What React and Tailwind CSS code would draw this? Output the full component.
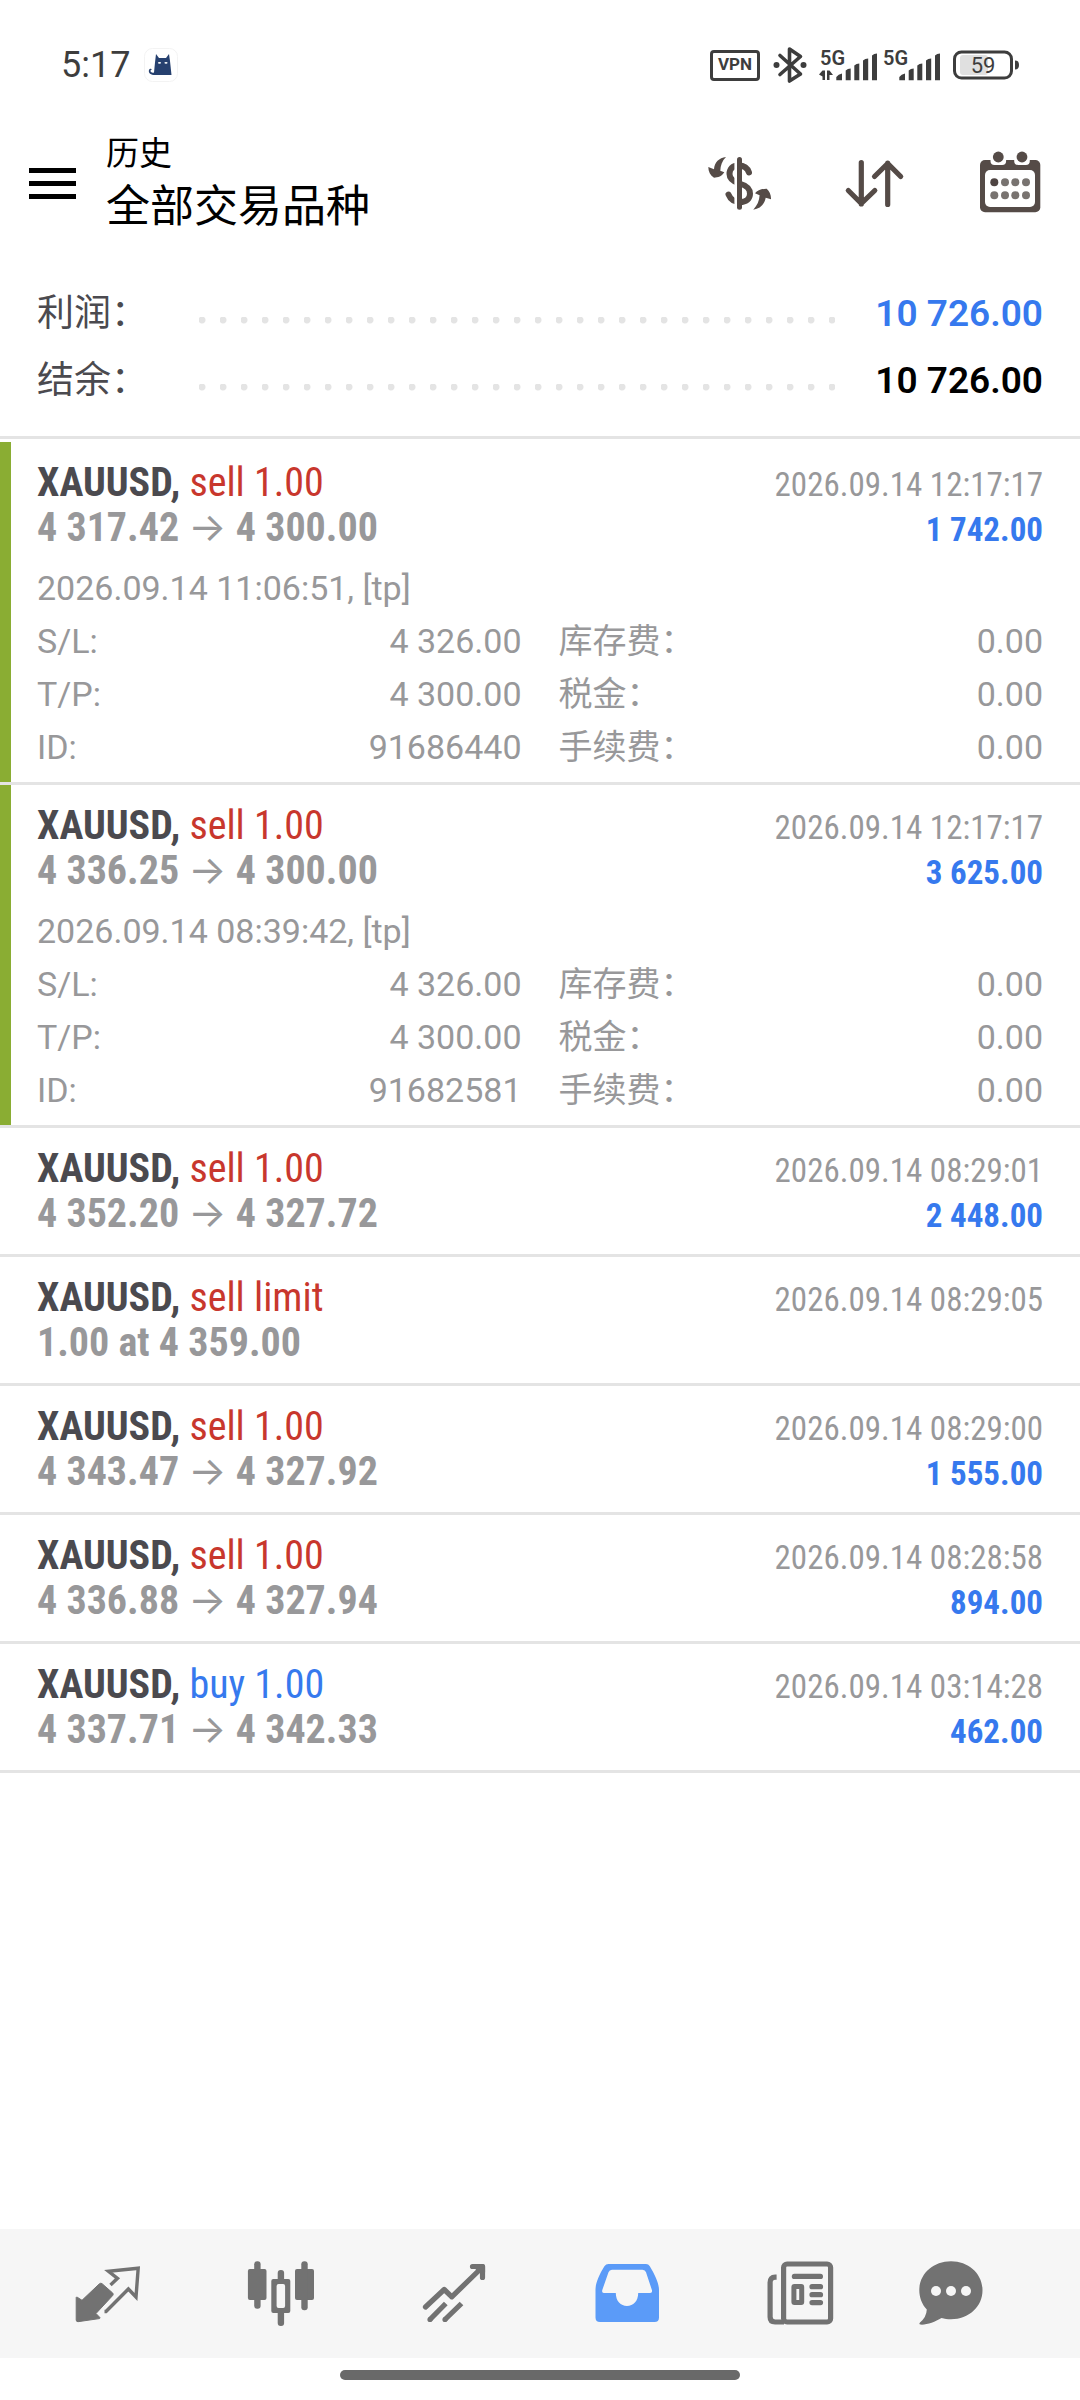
import React from 'react';

const TOTALS = [
  { label: '利润：', value: '10 726.00', color: 'text-[#3679ee]' },
  { label: '结余：', value: '10 726.00', color: 'text-black' },
];

const DEALS = [
  {
    id: '91686440',
    symbol: 'XAUUSD',
    side: 'sell',
    action: 'sell 1.00',
    from: '4 317.42',
    to: '4 300.00',
    closed: '2026.09.14 12:17:17',
    profit: '1 742.00',
    details: { opened: '2026.09.14 11:06:51, [tp]', sl: '4 326.00', tp: '4 300.00' },
  },
  {
    id: '91682581',
    symbol: 'XAUUSD',
    side: 'sell',
    action: 'sell 1.00',
    from: '4 336.25',
    to: '4 300.00',
    closed: '2026.09.14 12:17:17',
    profit: '3 625.00',
    details: { opened: '2026.09.14 08:39:42, [tp]', sl: '4 326.00', tp: '4 300.00' },
  },
  {
    id: '3',
    symbol: 'XAUUSD',
    side: 'sell',
    action: 'sell 1.00',
    from: '4 352.20',
    to: '4 327.72',
    closed: '2026.09.14 08:29:01',
    profit: '2 448.00',
  },
  {
    id: '4',
    symbol: 'XAUUSD',
    side: 'sell',
    action: 'sell limit',
    note: '1.00 at 4 359.00',
    closed: '2026.09.14 08:29:05',
  },
  {
    id: '5',
    symbol: 'XAUUSD',
    side: 'sell',
    action: 'sell 1.00',
    from: '4 343.47',
    to: '4 327.92',
    closed: '2026.09.14 08:29:00',
    profit: '1 555.00',
  },
  {
    id: '6',
    symbol: 'XAUUSD',
    side: 'sell',
    action: 'sell 1.00',
    from: '4 336.88',
    to: '4 327.94',
    closed: '2026.09.14 08:28:58',
    profit: '894.00',
  },
  {
    id: '7',
    symbol: 'XAUUSD',
    side: 'buy',
    action: 'buy 1.00',
    from: '4 337.71',
    to: '4 342.33',
    closed: '2026.09.14 03:14:28',
    profit: '462.00',
  },
];

/* ---------- status bar ---------- */

const CatIcon = () => (
  <svg width="34" height="34" viewBox="0 0 34 34" aria-hidden="true">
    <rect x="0.5" y="0.5" width="33" height="33" rx="8" fill="#fff" stroke="#f3f3f3" />
    <path
      d="M12 6l3 4h7l3-4 1 7 1.5 14H11c-4 0-7-2-6-5 .5-1.500 2.500-1.500 3-.5-1.500 0-2 1.500-1 2.500.8.8 2 .8 3 .5l1-10z"
      fill="#26406f"
    />
    <ellipse cx="15.500" cy="14.800" rx="1.600" ry="0.900" fill="#fff" />
    <ellipse cx="22" cy="14.800" rx="1.600" ry="0.900" fill="#fff" />
  </svg>
);

const BluetoothIcon = () => (
  <svg width="34" height="38" viewBox="0 0 34 38" fill="none" stroke="#3d3d3d" strokeWidth="3.600" aria-hidden="true">
    <path d="M7 9.500L27.500 28 16.500 35V3l11 7.500L7 28.500" strokeLinejoin="round" strokeLinecap="round" />
    <circle cx="3.500" cy="19" r="3" fill="#3d3d3d" stroke="none" />
    <circle cx="30.500" cy="19" r="3" fill="#3d3d3d" stroke="none" />
  </svg>
);

const SignalIcon = ({ data }) => (
  <svg width="60" height="44" viewBox="0 -6 60 44" fill="#3d3d3d" aria-hidden="true">
    <text x="1" y="16" fontSize="20" fontWeight="600" fontFamily="Roboto, sans-serif">5G</text>
    {data && (
      <path d="M3.500 21.500h2.500V31H3.500v-3.500L0 25.500zM8 21.500h2.500l3.500 4.500h-3.500v5H8z" />
    )}
    <path d="M17.300 31.300V28q2-3 5.700-3.500v6.800z" />
    <path d="M26.700 31.300V21.500q2-1.800 5-2v11.800z" />
    <path d="M35.300 31.300V16.500q2-1.800 5-2v16.800z" />
    <path d="M44 31.300V11.500q2-1.800 5.200-2v21.800z" />
    <path d="M53 31.300V6.500q2-1.800 5-2v26.800z" />
  </svg>
);

const BatteryIcon = () => (
  <svg width="66" height="30" viewBox="0 0 66 30" aria-hidden="true">
    <rect x="7" y="5" width="28" height="20" rx="3" fill="#e0e0e0" />
    <rect x="1.500" y="2" width="57" height="26" rx="7" fill="none" stroke="#3d3d3d" strokeWidth="3" />
    <path d="M62 10.500q4 0 4 4.500t-4 4.500z" fill="#3d3d3d" />
    <text x="30" y="23" fontSize="22" fill="#3d3d3d" textAnchor="middle" fontFamily="Roboto, sans-serif">59</text>
  </svg>
);

const StatusBar = () => (
  <div className="flex h-[130px] items-center pl-[61px] pr-[61px] text-[#3d3d3d]">
    <span className="text-[36px]">5:17</span>
    <span className="ml-[14px]">
      <CatIcon />
    </span>
    <div className="ml-auto flex items-center">
      <span className="flex h-[31px] w-[50px] items-center justify-center rounded-[4px] border-[3px] border-[#3d3d3d] text-[17px] font-bold">
        VPN
      </span>
      <span className="ml-[13px]">
        <BluetoothIcon />
      </span>
      <span className="ml-3 flex gap-[3px]">
        <SignalIcon data />
        <SignalIcon />
      </span>
      <span className="ml-[11px]">
        <BatteryIcon />
      </span>
    </div>
  </div>
);

/* ---------- header ---------- */

const CurrencyIcon = () => (
  <svg width="72" height="72" viewBox="0 0 72 72" fill="#554b47" aria-hidden="true">
    <path
      d="M45 25.500C43.500 21 40 18.500 34.500 18.500 28.500 18.500 25.500 22 25.500 27c0 6 5 8 10 9.500 7 2 10.500 4.500 10.500 10.300C46 52 42 55 36 55c-5.500 0-9.500-2.500-11.500-7.500"
      fill="none"
      stroke="#554b47"
      strokeWidth="6"
      strokeLinecap="round"
    />
    <path d="M31.700 12v50" stroke="#fff" strokeWidth="2.600" />
    <rect x="33" y="10" width="5" height="52.700" rx="2.500" />
    <path d="M22 10C15 11 10.500 15 10 22.300L4.300 20c0 4.500 2 8.500 5.700 10.700 4 0 8-1.500 10.300-5.400l-4-1.600C16.500 18.500 18 14 22 10z" />
    <path d="M49.300 62.700c4-4.500 6-9 6.300-14.500L51 46.300c2.500-3 7-4.700 11.700-4.600 2.800 2.300 4.500 6.300 4.300 10.600l-5.300-1.600C60.500 57.500 56 61.500 49.300 62.700z" />
  </svg>
);

const SortIcon = () => (
  <svg
    width="72"
    height="72"
    viewBox="0 0 72 72"
    fill="none"
    stroke="#554b47"
    strokeWidth="5.200"
    strokeLinecap="round"
    strokeLinejoin="round"
    aria-hidden="true"
  >
    <path d="M22.300 15.500V57M9.300 43.500l13 13 13.500-13" />
    <path d="M48.700 57.500V16M35.500 29.500l13.200-13 13 13" />
  </svg>
);

const CalendarIcon = () => (
  <svg width="72" height="72" viewBox="0 0 72 72" aria-hidden="true">
    <rect x="6" y="13" width="60.300" height="52.300" rx="5" fill="#554b47" />
    <rect x="16.500" y="2" width="15.600" height="16" rx="4" fill="#fff" />
    <rect x="40.200" y="2" width="15.600" height="16" rx="4" fill="#fff" />
    <circle cx="24.300" cy="10" r="5.400" fill="#554b47" />
    <circle cx="48" cy="10" r="5.400" fill="#554b47" />
    <rect x="11" y="23" width="50" height="37" rx="5" fill="#fff" />
    {[35.3, 48.3].map((cy) =>
      [20.3, 31, 41.3, 52].map((cx) => (
        <circle key={`${cx}-${cy}`} cx={cx} cy={cy} r="4" fill={cx < 21 && cy < 36 ? '#4e4442' : '#787370'} />
      ))
    )}
  </svg>
);

const Header = () => (
  <header className="flex h-[106px] items-center pl-[29px] pr-[34px]">
    <button type="button" aria-label="菜单" className="flex w-[47px] flex-col gap-2">
      <span className="h-[5px] w-full bg-black"></span>
      <span className="h-[5px] w-full bg-black"></span>
      <span className="h-[5px] w-full bg-black"></span>
    </button>
    <div className="ml-[30px] text-black">
      <p className="text-[33px] leading-[48px]">历史</p>
      <h1 className="text-[44px] leading-[58px]">全部交易品种</h1>
    </div>
    <div className="ml-auto flex gap-[63px]">
      <button type="button" aria-label="货币"><CurrencyIcon /></button>
      <button type="button" aria-label="排序"><SortIcon /></button>
      <button type="button" aria-label="日历"><CalendarIcon /></button>
    </div>
  </header>
);

const Totals = () => (
  <dl className="border-b-[3px] border-[#e4e4e4] px-[37px] pt-[44px] pb-[22px]">
    {TOTALS.map((row) => (
      <div key={row.label} className="flex h-[67px] items-center text-[37px]">
        <dt className="w-[162px] text-[#4b4a4f]">{row.label}</dt>
        <dd className="flex flex-1 items-center">
          <span className="mt-[14px] h-[7px] flex-1 bg-[radial-gradient(circle_at_3px_3px,#e4e4e4_3px,transparent_4px)] bg-[size:21px_7px]"></span>
          <span className={`ml-10 font-semibold ${row.color}`}>{row.value}</span>
        </dd>
      </div>
    ))}
  </dl>
);

/* ---------- deals ---------- */

const DetailRow = ({ label, value }) => (
  <div className="flex h-[53px] justify-between">
    <dt>{label}</dt>
    <dd>{value}</dd>
  </div>
);

const Deal = ({ deal }) => {
  const { details } = deal;

  return (
    <li className="border-b-[3px] border-[#e4e4e4]">
      <div
        className={
          details
            ? 'border-l-[11px] border-[#8aad33] pt-[18px] pr-[37px] pb-2 pl-[26px]'
            : 'px-[37px] py-[18px]'
        }
      >
        <div className="font-['Roboto_Condensed',Roboto,'Noto_Sans_CJK_SC',sans-serif] leading-[45px]">
          <div className="flex h-[45px] items-baseline justify-between">
            <h2 className="text-[40px] font-bold text-[#4b4a4f]">
              {deal.symbol},{' '}
              <span className={deal.side === 'buy' ? 'font-normal text-[#3679ee]' : 'font-normal text-[#c8372d]'}>
                {deal.action}
              </span>
            </h2>
            <time className="text-[33px] text-[#98989a]">{deal.closed}</time>
          </div>
          <div className="flex h-[45px] items-baseline justify-between">
            <p className="text-[40px] font-bold text-[#98989a]">
              {deal.note || (
                <>
                  {deal.from}{' '}
                  <span className="font-[Inter,sans-serif] leading-none font-normal">→</span>{' '}
                  {deal.to}
                </>
              )}
            </p>
            {deal.profit && <p className="text-[33px] font-bold text-[#3679ee]">{deal.profit}</p>}
          </div>
        </div>

        {details && (
          <div className="pt-3 text-[34px] leading-[53px] text-[#98989a]">
            <p className="h-[53px]">{details.opened}</p>
            <dl className="grid grid-cols-2 gap-x-[37px]">
              <DetailRow label="S/L:" value={details.sl} />
              <DetailRow label="库存费：" value="0.00" />
              <DetailRow label="T/P:" value={details.tp} />
              <DetailRow label="税金：" value="0.00" />
              <DetailRow label="ID:" value={deal.id} />
              <DetailRow label="手续费：" value="0.00" />
            </dl>
          </div>
        )}
      </div>
    </li>
  );
};

/* ---------- bottom navigation ---------- */

const QuotesIcon = () => (
  <svg width="72" height="72" viewBox="0 0 72 72" aria-hidden="true">
    <path
      d="M4.200 39.500q.3-.8 1-.3L10 42.300 27.500 25.700q1.400-1 2.600 0L40.700 35q1 1.200 0 2.500L24 55.500l3.900 4q.3.900-.6 1.100L6 63.700q-1.800 0-1.800-1.700z"
      fill="#727272"
      stroke="#727272"
      strokeLinejoin="round"
    />
    <path
      d="M38.500 27l7-6.700-9-7L66.200 10.200 64 39l-7.600-8L34 53.500h-1.500"
      fill="none"
      stroke="#727272"
      strokeWidth="3.400"
    />
  </svg>
);

const ChartIcon = () => (
  <svg width="72" height="72" viewBox="0 0 72 72" fill="#727272" aria-hidden="true">
    <rect x="2.900" y="11" width="18.600" height="31" rx="2" />
    <rect x="9.200" y="3.300" width="6.400" height="47.500" rx="3" />
    <rect x="50" y="11" width="19" height="31" rx="2" />
    <rect x="56.300" y="3.300" width="6.400" height="49" rx="3" />
    <rect x="32.700" y="12" width="6.400" height="56" rx="3" />
    <rect x="26.300" y="21" width="19" height="34" rx="2" />
    <rect x="31.600" y="26" width="8.500" height="24" rx="2" fill="#f6f6f6" />
  </svg>
);

const TradeIcon = () => (
  <svg
    width="72"
    height="72"
    viewBox="0 0 72 72"
    fill="none"
    stroke="#727272"
    strokeWidth="5.200"
    strokeLinejoin="round"
    aria-hidden="true"
  >
    <path d="M7.500 49L26.200 31.500l7.600 7.300L64 9.500" strokeLinecap="round" />
    <path d="M54.500 8.500h10v11" strokeLinecap="round" />
    <path d="M59 9l5.500-.5V14z" fill="#727272" />
    <path d="M27.800 45.500L12 61.500M43.500 45.500L27 61.500" />
    <circle cx="12" cy="61.500" r="2.600" fill="#727272" stroke="none" />
    <circle cx="27" cy="61.500" r="2.600" fill="#727272" stroke="none" />
  </svg>
);

const HistoryIcon = () => (
  <svg width="72" height="72" viewBox="0 0 72 72" aria-hidden="true">
    <path
      fillRule="evenodd"
      fill="#5b9bf8"
      d="M17.500 6H55q2.500 0 3.800 2.200C64 17 68 25 68 32v27.500q0 4.500-4.500 4.500h-54.500Q4.500 64 4.500 59.500V32c0-7 3.500-15 8.900-23.800Q15 6 17.500 6zM21 11.700q-2.600 0-3.500 2.500L11.300 32q-.8 3 1.500 3h12c0 8 5 13 11.200 13s11.200-5 11.200-13h12q2.500 0 1.700-3L55 14.200q-.8-2.500-3.500-2.500z"
    />
  </svg>
);

const NewsIcon = () => (
  <svg width="72" height="72" viewBox="0 0 72 72" fill="none" stroke="#727272" aria-hidden="true">
    <rect x="19.600" y="6" width="47" height="58" rx="3.500" strokeWidth="5.200" />
    <path d="M12.600 19.200h-1.500q-5 0-5 5.300V59q0 5 5 5H20" strokeWidth="5.200" />
    <path d="M30.400 18.400h26" strokeWidth="5.200" strokeLinecap="round" />
    <rect x="29.900" y="28.600" width="7.800" height="16" rx="0.500" strokeWidth="5" strokeLinejoin="round" />
    <path d="M48 28.700h8.500M48 36.700h8.500M48 44.600h8.500" strokeWidth="5.200" strokeLinecap="round" />
  </svg>
);

const ChatIcon = () => (
  <svg width="72" height="72" viewBox="0 0 72 72" aria-hidden="true">
    <path
      d="M36 3.300c18 0 31.500 12.700 31.500 29S54 61.300 36 61.300c-3.500 0-6.500-.3-9.500-1.200C20 64 12 67 5.500 66.600q-2-.4-.5-2 6.500-5.500 6.800-13C7 46.500 4.300 39.500 4.300 32.300 4.300 16 18 3.300 36 3.300z"
      fill="#727272"
    />
    <circle cx="21" cy="33" r="5" fill="#f6f6f6" />
    <circle cx="36" cy="33" r="5" fill="#f6f6f6" />
    <circle cx="51" cy="33" r="5" fill="#f6f6f6" />
  </svg>
);

const TABS = [
  { label: '行情', Icon: QuotesIcon },
  { label: '图表', Icon: ChartIcon },
  { label: '交易', Icon: TradeIcon },
  { label: '历史', Icon: HistoryIcon },
  { label: '新闻', Icon: NewsIcon },
  { label: '消息', Icon: ChatIcon },
];

const App = () => {
  return (
    <div className="flex min-h-screen flex-col bg-white font-[Roboto,'Noto_Sans_CJK_SC',sans-serif]" lang="zh-CN">
      <StatusBar />
      <Header />
      <main>
        <Totals />
        <ul className="pt-[3px]">
          {DEALS.map((deal) => (
            <Deal key={deal.id} deal={deal} />
          ))}
        </ul>
      </main>

      <footer className="mt-auto">
        <nav className="grid h-[129px] grid-cols-[repeat(5,173fr)_128fr] items-center bg-[#f6f6f6] pl-[21px] pr-[65px]">
          {TABS.map(({ label, Icon }) => (
            <button key={label} type="button" aria-label={label} className="flex justify-center">
              <Icon />
            </button>
          ))}
        </nav>
        <div className="flex h-[42px] justify-center pt-3">
          <div className="h-[10px] w-[400px] rounded-full bg-[#696969]"></div>
        </div>
      </footer>
    </div>
  );
};

export default App;
